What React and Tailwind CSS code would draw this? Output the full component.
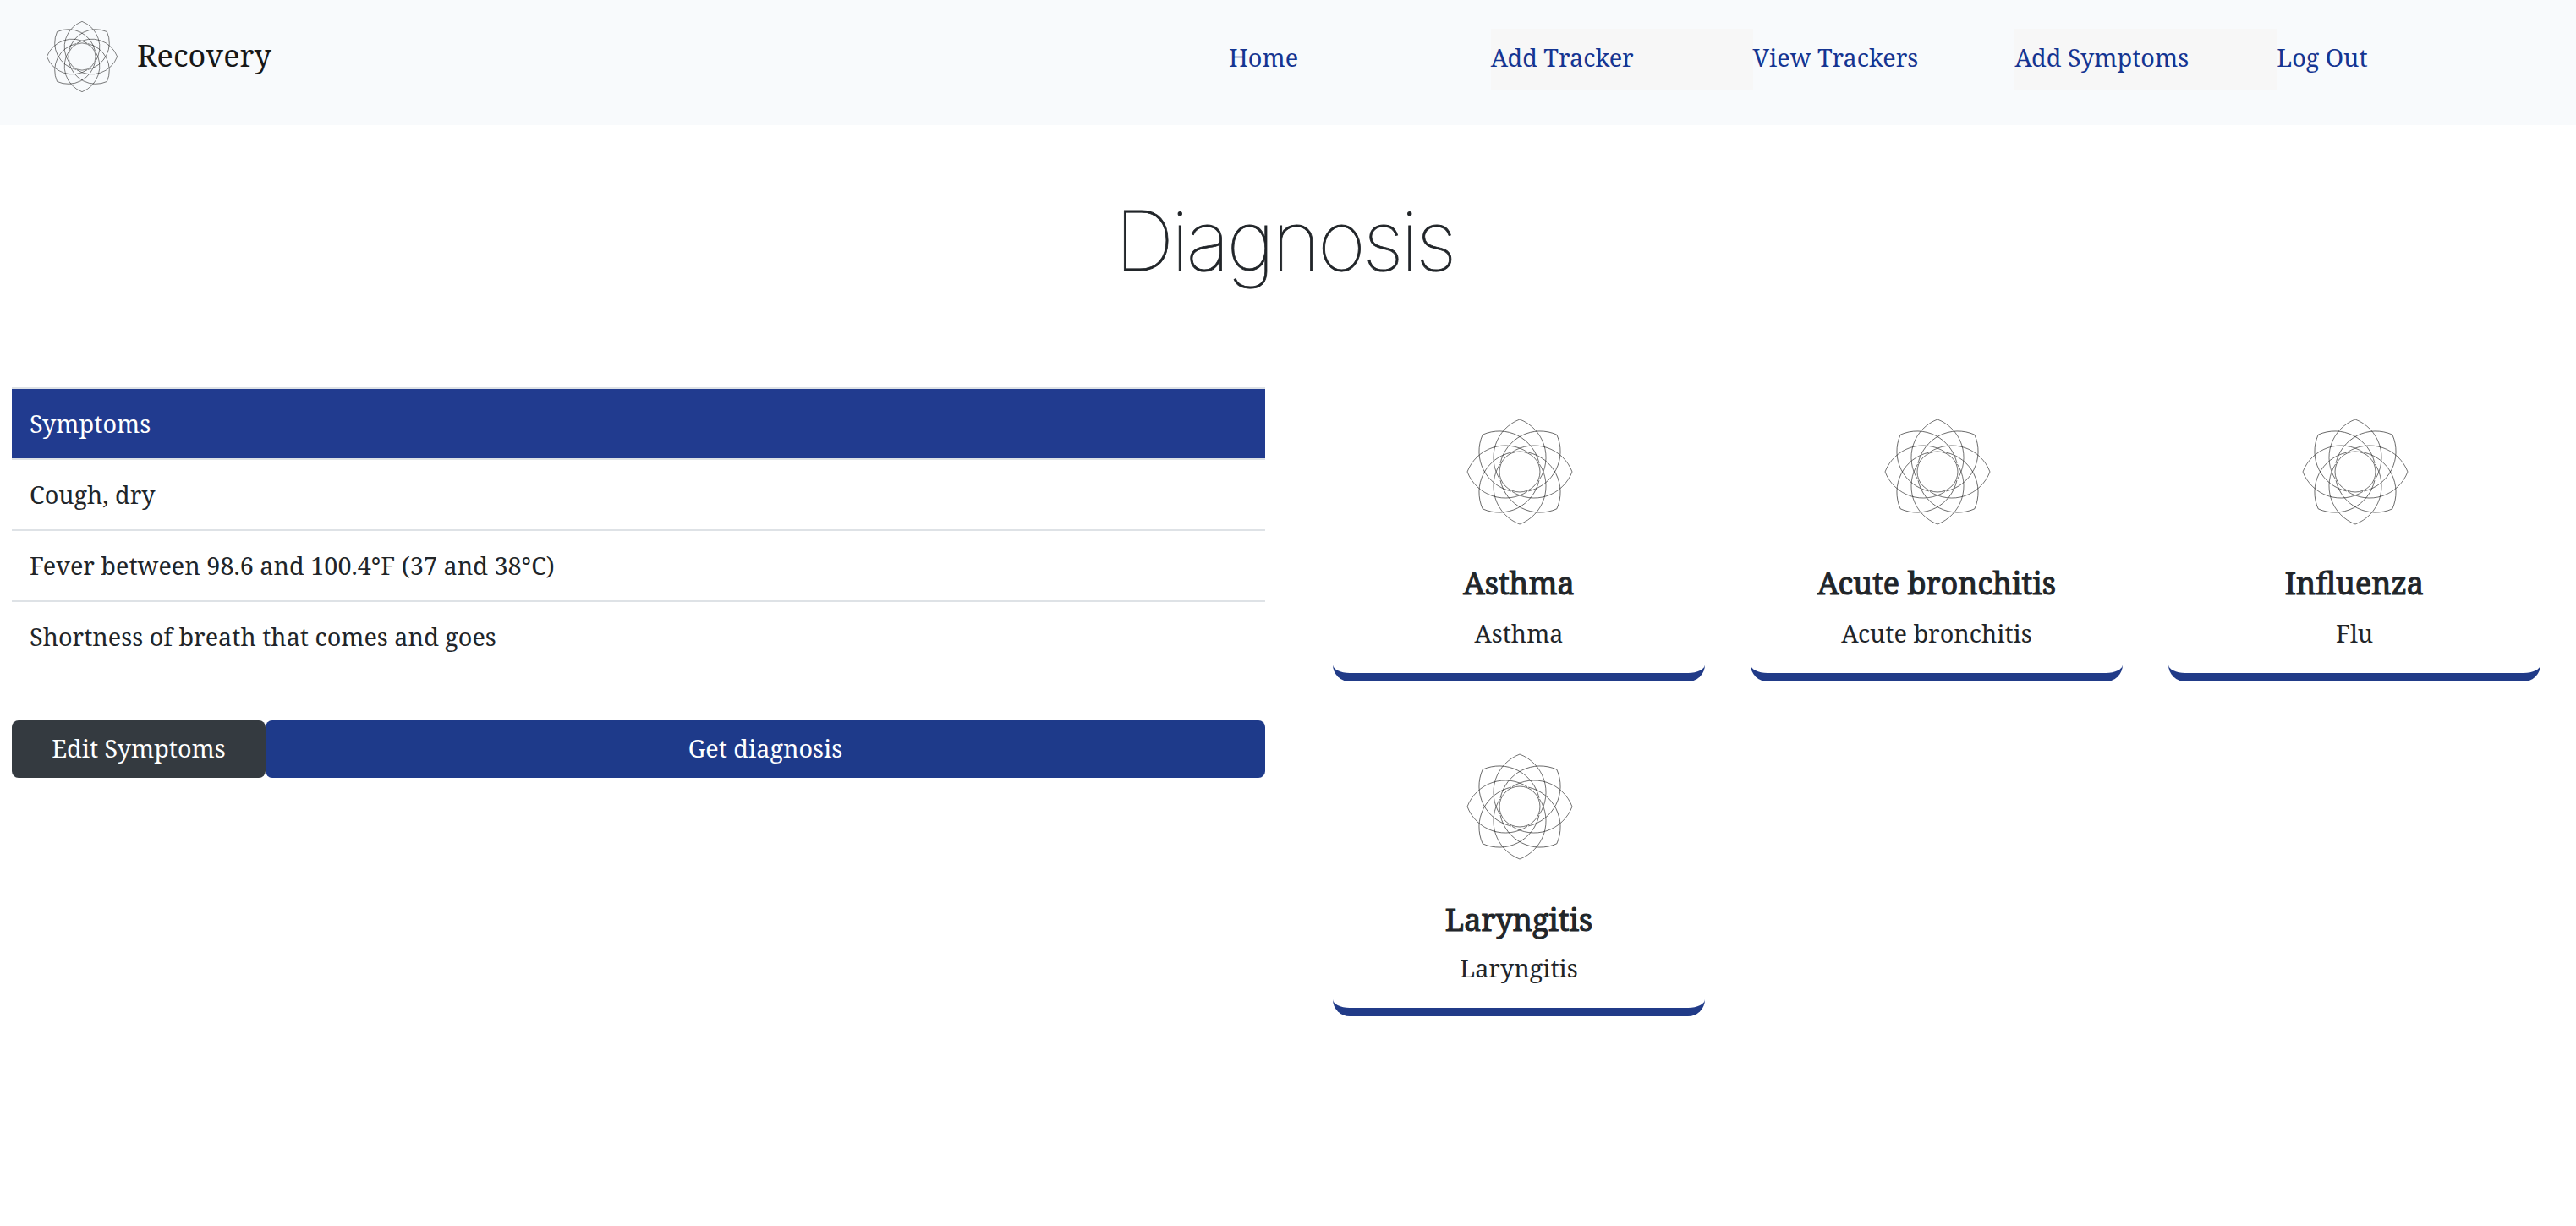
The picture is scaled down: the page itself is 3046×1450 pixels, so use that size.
const SERIF = "font-['Noto_Serif','Droid_Serif','DejaVu_Serif',serif]";

const PETAL =
  "M9 23.4A48.15 48.15 0 0 1 -62 0A48.15 48.15 0 0 1 9 -23.4";
const ANGLES = [0, 45, 90, 135, 180, 225, 270, 315];

function Flower({ className, strokeWidth }) {
  return (
    <svg viewBox="-64 -64 128 128" className={className} fill="none" stroke="#111" strokeWidth={strokeWidth} strokeLinejoin="round">
      {ANGLES.map((a) => (
        <path key={a} d={PETAL} transform={`rotate(${a})`} />
      ))}
      <circle r="24" />
    </svg>
  );
}

const NAV = [
  { label: "Home", shaded: false },
  { label: "Add Tracker", shaded: true },
  { label: "View Trackers", shaded: false },
  { label: "Add Symptoms", shaded: true },
  { label: "Log Out", shaded: false },
];

const SYMPTOMS = [
  "Cough, dry",
  "Fever between 98.6 and 100.4°F (37 and 38°C)",
  "Shortness of breath that comes and goes",
];

const RESULTS = [
  { name: "Asthma", common: "Asthma" },
  { name: "Acute bronchitis", common: "Acute bronchitis" },
  { name: "Influenza", common: "Flu" },
  { name: "Laryngitis", common: "Laryngitis" },
];

export default function App() {
  return (
    <div className={`min-h-[1450px] w-full bg-white text-[28.8px] leading-[42px] text-[#212529] ${SERIF}`}>
      <header className="flex h-[148px] items-start justify-between bg-slate-50 pl-[54px] pr-[44px]">
        <div className="flex items-center pt-[24px]">
          <Flower className="size-[86px]" strokeWidth="0.8" />
          <span className="ml-[22px] pb-[3px] text-[36px] leading-[52px] text-[#181818]">Recovery</span>
        </div>
        <nav className="mt-[34px] grid w-[1549px] grid-cols-5 text-[#153592]">
          {NAV.map((item) => (
            <a key={item.label} className={`flex h-[72px] items-center pb-[4px] ${item.shaded ? "bg-[#f7f7f7]" : ""}`}>
              {item.label}
            </a>
          ))}
        </nav>
      </header>

      <h1 className="mt-[79px] pr-[9px] text-center font-['Inter'] text-[98px] font-thin leading-[116px] tracking-[-3.4px] [-webkit-text-stroke:0.8px_#212529]">
        Diagnosis
      </h1>

      <main className="mt-[115px] flex items-start pl-[14px] pr-[42px]">
        <section className="w-[1482px]">
          <div className="flex h-[86px] items-center border-y-2 border-[#dee2e6] bg-[#213b8f] px-[21px] text-white">
            Symptoms
          </div>
          {SYMPTOMS.map((s) => (
            <div
              key={s}
              className="flex h-[84px] items-center border-b-2 border-[#dee2e6] px-[21px] last-of-type:border-transparent"
            >
              {s}
            </div>
          ))}
          <footer className="mt-[56px] flex h-[68px] text-white">
            <button className="w-[300px] rounded-lg bg-[#343a40] pb-[3px]">Edit Symptoms</button>
            <button className="flex-1 rounded-lg bg-[#1e3a8a] pb-[3px]">Get diagnosis</button>
          </footer>
        </section>

        <section className="ml-[80px] grid flex-1 grid-cols-3 gap-x-[54px] gap-y-[48px]">
          {RESULTS.map((r) => (
            <article
              key={r.name}
              className="group flex h-[348px] flex-col items-center rounded-[20px] border-b-[10px] border-[#213b88] pt-[36px]"
            >
              <Flower className="ml-[2px] size-[128px]" strokeWidth="0.6" />
              <h2 className="mt-[41px] text-[36px] font-normal leading-[54px] [-webkit-text-stroke:1.1px_#212529] group-last:mt-[43px]">
                {r.name}
              </h2>
              <p className="mt-[11px] group-last:mt-[9px]">{r.common}</p>
            </article>
          ))}
        </section>
      </main>
    </div>
  );
}
